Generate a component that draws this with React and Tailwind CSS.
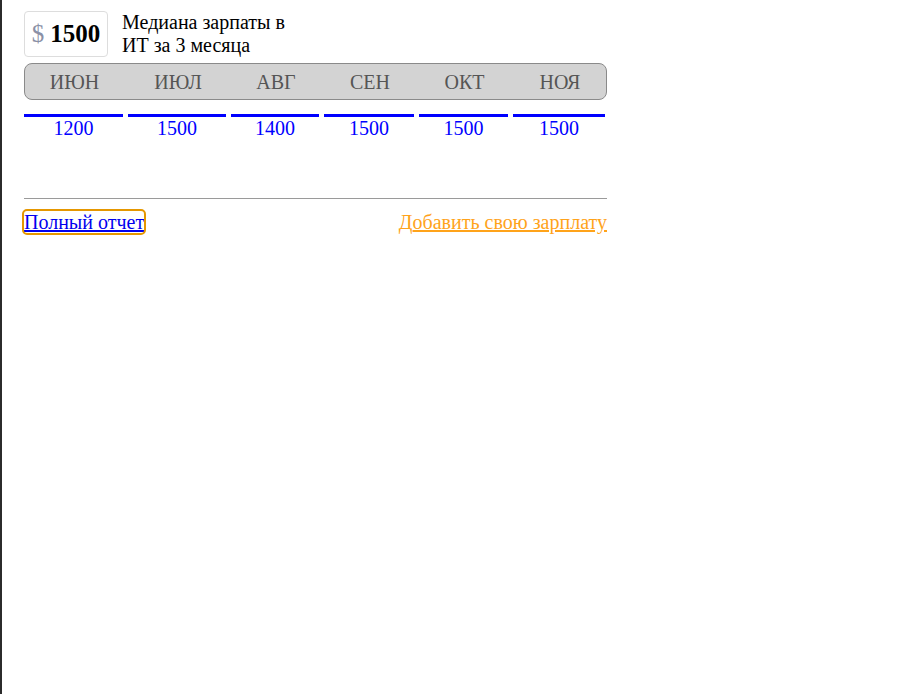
const months = [
  { name: "ИЮН", value: 1200, w: "w-[99px]" },
  { name: "ИЮЛ", value: 1500, w: "w-[98px]" },
  { name: "АВГ", value: 1400, w: "w-[88px]" },
  { name: "СЕН", value: 1500, w: "w-[90px]" },
  { name: "ОКТ", value: 1500, w: "w-[89px]" },
  { name: "НОЯ", value: 1500, w: "w-[92px]" },
];

export default function App() {
  return (
    <div className="min-h-[694px] border-l-2 border-[#2b2b2b] bg-white font-['Liberation_Serif',serif]">
      <div className="ml-[22px] w-[583px] pt-[11px]">
        {/* Шапка */}
        <div className="flex items-start gap-[14px]">
          <div className="flex h-[46px] w-[84px] items-center justify-center gap-[6px] rounded-[4px] border border-[#dddddd] text-[25px]">
            <span className="text-[#8a90a6]">$</span>
            <span className="font-bold text-black">1500</span>
          </div>
          <div className="text-[20px] leading-[23px] text-black">
            Медиана зарпаты в
            <br />
            ИТ за 3 месяца
          </div>
        </div>

        {/* Месяцы */}
        <div className="mt-[6px] flex h-[37px] items-center gap-[5px] rounded-[8px] border border-[#8a8a8a] bg-[#d3d3d3] text-[20px] text-[#555555]">
          {months.map((m) => (
            <div key={m.name} className={`${m.w} text-center`}>
              {m.name}
            </div>
          ))}
        </div>

        {/* Значения */}
        <div className="mt-[14px] flex gap-[5px]">
          {months.map((m) => (
            <div
              key={m.name}
              className={`${m.w} border-t-[3px] border-[#0000ff] text-center text-[20px] leading-[22px] text-[#0000ff]`}
            >
              {m.value}
            </div>
          ))}
        </div>

        <div className="mt-[59px] h-px w-[583px] bg-[#9a9a9a]" />

        {/* Ссылки */}
        <div className="mt-[12px] flex items-center justify-between text-[20px] leading-[22px]">
          <a
            href="#"
            className="rounded-[3px] text-[#0000ee] underline outline-2 outline-offset-0 outline-[#e59700]"
          >
            Полный отчет
          </a>
          <a href="#" className="text-[#ffa31a] underline">
            <span className="inline-block">Д</span>обавить свою зарплату
          </a>
        </div>
      </div>
    </div>
  );
}
